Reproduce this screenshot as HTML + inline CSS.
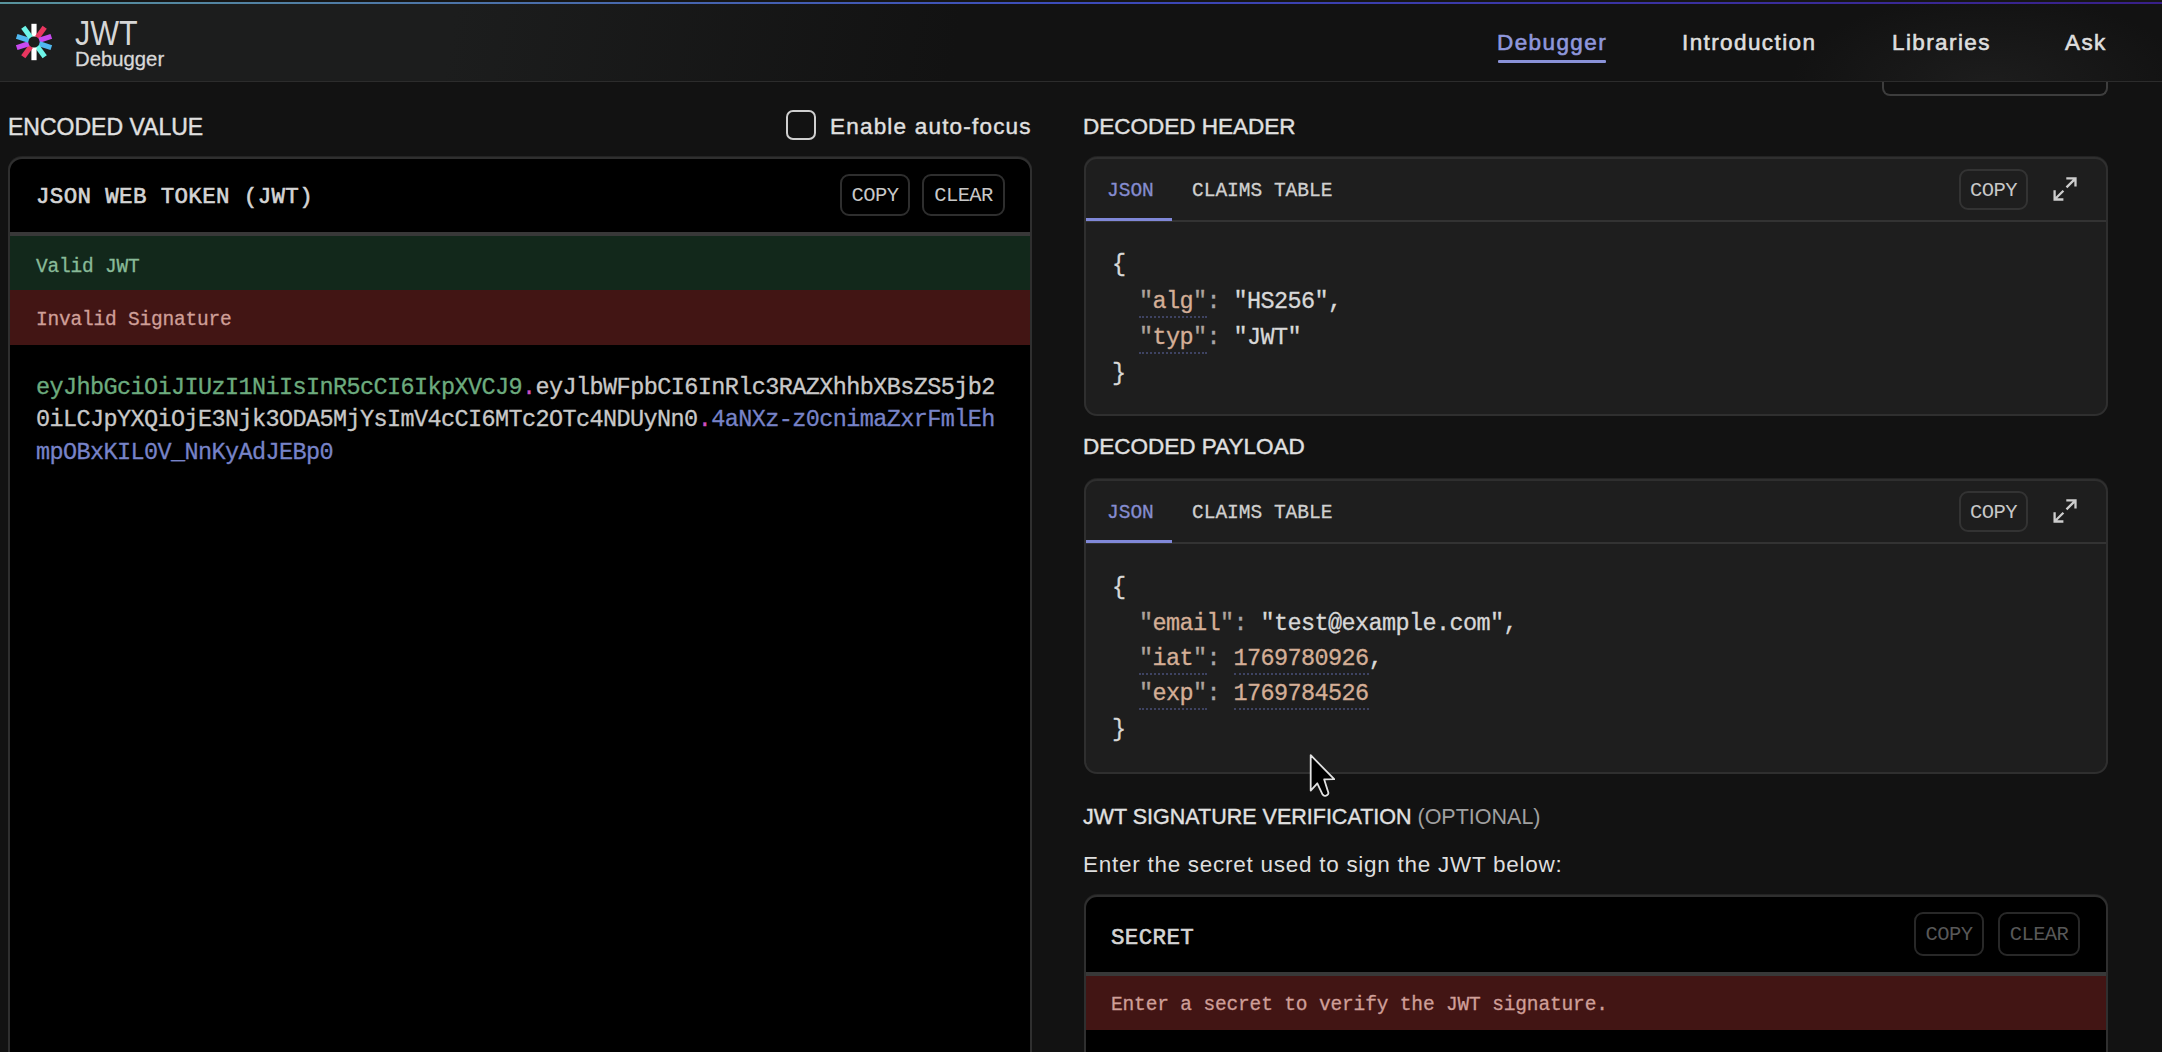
<!DOCTYPE html>
<html>
<head>
<meta charset="utf-8">
<style>
*{box-sizing:border-box;margin:0;padding:0}
html,body{width:2162px;height:1052px;overflow:hidden;background:#121212;font-family:"Liberation Sans",sans-serif;color:#e6e6e6}
.abs{position:absolute}
.mono{font-family:"Liberation Mono",monospace}
#hdr{z-index:1;left:0;top:0;width:2162px;height:82px;background:radial-gradient(ellipse 200px 90px at 1990px 85px,#1d1d1d 0%,rgba(18,18,18,0) 100%),linear-gradient(100deg,#1c1d1d 0px,#1c1d1d 450px,#121212 950px,#121212 100%);border-bottom:1px solid #2c2c2c}
#topline{z-index:2;left:0;top:2px;width:2162px;height:2px;background:linear-gradient(90deg,#58939c 0%,#4a6eaa 25%,#3c4cba 49%,#3a32a2 76%,#381f88 100%)}
.nav{z-index:3;top:28px;font-size:22.5px;font-weight:400;letter-spacing:1.4px;-webkit-text-stroke:.6px currentColor;color:#dedede;white-space:nowrap;line-height:30px}
.label{font-size:23px;color:#e0e0e0;-webkit-text-stroke:.4px currentColor;white-space:nowrap;line-height:26px}
.box{border:2px solid #2f2f2f;border-radius:13px;overflow:hidden;box-shadow:0 -1px 0 #232323}
.q{color:#ada39b}.k{color:#d4ae96}.c{color:#a8a8a8}
.json{position:absolute;left:26px;font-family:"Liberation Mono",monospace;font-size:23.5px;letter-spacing:-.6px;line-height:30px;color:#d8d8d8;white-space:pre;-webkit-text-stroke:.3px currentColor}
.u{border-bottom:2px dotted #3e4362;padding-bottom:1px}
.btn{position:absolute;border:2px solid #2e2e2e;border-radius:9px;font-family:"Liberation Mono",monospace;font-size:20.5px;letter-spacing:-.6px;color:#c8c8c8;text-align:center;line-height:40px}
</style>
</head>
<body>
<div id="hdr" class="abs"></div>
<div class="abs" style="z-index:2;left:0;top:0;width:2162px;height:2px;background:#161616"></div>
<div id="topline" class="abs"></div>

<!-- logo -->
<svg class="abs" style="left:13.5px;top:21.5px;z-index:3" width="40" height="40" viewBox="-20 -20 40 40">
  <g stroke-width="5.2" stroke-linecap="butt">
    <line x1="0" y1="-5.5" x2="0" y2="-18.2" stroke="#ffffff" transform="rotate(0)"/>
    <line x1="0" y1="-5.5" x2="0" y2="-18.2" stroke="#e8365f" transform="rotate(36)"/>
    <line x1="0" y1="-5.5" x2="0" y2="-18.2" stroke="#c84af0" transform="rotate(72)"/>
    <line x1="0" y1="-5.5" x2="0" y2="-18.2" stroke="#50b8f0" transform="rotate(108)"/>
    <line x1="0" y1="-5.5" x2="0" y2="-18.2" stroke="#6ef5e8" transform="rotate(144)"/>
    <line x1="0" y1="-5.5" x2="0" y2="-18.2" stroke="#ffffff" transform="rotate(180)"/>
    <line x1="0" y1="-5.5" x2="0" y2="-18.2" stroke="#e8365f" transform="rotate(216)"/>
    <line x1="0" y1="-5.5" x2="0" y2="-18.2" stroke="#c84af0" transform="rotate(252)"/>
    <line x1="0" y1="-5.5" x2="0" y2="-18.2" stroke="#50b8f0" transform="rotate(288)"/>
    <line x1="0" y1="-5.5" x2="0" y2="-18.2" stroke="#6ef5e8" transform="rotate(324)"/>
  </g>
</svg>
<div id="jwt" class="abs" style="z-index:3;left:74.5px;top:13.5px;font-size:34.5px;line-height:38px;color:#d6d6d6;transform:scaleX(.885);transform-origin:0 0">JWT</div>
<div id="dbg" class="abs" style="z-index:3;left:75px;top:46px;font-size:20.5px;line-height:25px;color:#d8d8d8;-webkit-text-stroke:.3px currentColor;transform:scaleX(.99);transform-origin:0 0">Debugger</div>

<div id="nav1" class="abs nav" style="left:1497px;color:#8f97dc">Debugger</div>
<div class="abs" style="z-index:3;left:1498px;top:60px;width:108px;height:3px;background:#8a92d8;border-radius:1px"></div>
<div id="nav2" class="abs nav" style="left:1682px">Introduction</div>
<div id="nav3" class="abs nav" style="left:1892px">Libraries</div>
<div id="nav4" class="abs nav" style="left:2065px">Ask</div>

<!-- partially hidden box under header -->
<div class="abs" style="left:1882px;top:70px;width:226px;height:26px;border:2px solid #3d3d3d;border-top:none;border-radius:0 0 8px 8px;background:#111"></div>

<!-- LEFT -->
<div id="encl" class="abs label" style="left:8px;top:114px">ENCODED VALUE</div>
<div class="abs" style="left:786px;top:110px;width:30px;height:30px;border:2.5px solid #cfcfcf;border-radius:7px"></div>
<div id="autof" class="abs label" style="left:830px;top:114px;font-size:22.5px;letter-spacing:1.2px">Enable auto-focus</div>

<div id="lbox" class="abs box" style="left:8px;top:157px;width:1024px;height:960px;background:#000;border-radius:14px">
  <div id="jwtt" class="abs mono" style="left:26px;top:23px;font-size:22.5px;letter-spacing:.35px;-webkit-text-stroke:.6px #d4d4d4;color:#d4d4d4;line-height:30px">JSON WEB TOKEN (JWT)</div>
  <div class="btn" style="left:830px;top:15px;width:70px;height:42px">COPY</div>
  <div class="btn" style="left:912px;top:15px;width:83px;height:42px">CLEAR</div>
  <div class="abs" style="left:0;top:72.5px;width:1024px;height:4px;background:#383838"></div>
  <div class="abs" style="left:0;top:76.5px;width:1024px;height:54.5px;background:#12281b"></div>
  <div id="valid" class="abs mono" style="left:26px;top:94.5px;font-size:19.5px;-webkit-text-stroke:.3px #88ba98;color:#88ba98;letter-spacing:-.2px;line-height:26px">Valid JWT</div>
  <div class="abs" style="left:0;top:131px;width:1024px;height:55px;background:#421514"></div>
  <div id="invalid" class="abs mono" style="left:26px;top:148px;font-size:19.5px;-webkit-text-stroke:.3px #cf9f98;color:#cf9f98;letter-spacing:-.2px;line-height:26px">Invalid Signature</div>
  <div id="tok" class="abs mono" style="left:26px;top:213px;font-size:23.5px;letter-spacing:-.6px;line-height:32.25px;color:#c8c8c8;-webkit-text-stroke:.3px currentColor;white-space:pre"><span style="color:#6cab7e">eyJhbGciOiJIUzI1NiIsInR5cCI6IkpXVCJ9</span><span style="color:#d04fc0">.</span>eyJlbWFpbCI6InRlc3RAZXhhbXBsZS5jb2
0iLCJpYXQiOjE3Njk3ODA5MjYsImV4cCI6MTc2OTc4NDUyNn0<span style="color:#d04fc0">.</span><span style="color:#7783c8">4aNXz-z0cnimaZxrFmlEh
mpOBxKIL0V_NnKyAdJEBp0</span></div>
</div>

<!-- RIGHT -->
<div id="dhl" class="abs label" style="left:1083px;top:114px;font-size:22.5px">DECODED HEADER</div>
<div id="hbox" class="abs box" style="left:1084px;top:157px;width:1024px;height:259px;background:#1e1e1e">
  <div class="abs" style="left:0;top:60.5px;width:1024px;height:2px;background:#333"></div>
  <div class="abs" style="left:0;top:58.5px;width:86px;height:3px;background:#8088d8"></div>
  <div class="abs mono" style="left:21px;top:19px;font-size:19.5px;-webkit-text-stroke:.3px #858cd0;color:#858cd0;line-height:26px">JSON</div>
  <div class="abs mono" style="left:106px;top:19px;font-size:19.5px;-webkit-text-stroke:.3px #d0d0d0;color:#d0d0d0;line-height:26px">CLAIMS TABLE</div>
  <div class="btn" style="left:873px;top:9.5px;width:69px;height:41px;border-color:#333;line-height:40px">COPY</div>
  <svg class="abs" style="left:960px;top:11px" width="38" height="38" viewBox="0 0 38 38"><g stroke="#cdcdcd" stroke-width="2.3" fill="none" stroke-linejoin="miter" stroke-linecap="butt"><path d="M20.3 8.4 H29.5 V16.6 M29.3 8.6 L20.5 17.4"/><path d="M8.6 20.3 V29.5 H17.4 M8.8 29.3 L17.4 20.7"/></g></svg>
  <div class="json" style="top:91px">{</div>
  <div class="json" style="top:128px">  <span class="u"><span class="q">"</span><span class="k">alg</span><span class="q">"</span></span><span class="c">:</span> "HS256",</div>
  <div class="json" style="top:163.5px">  <span class="u"><span class="q">"</span><span class="k">typ</span><span class="q">"</span></span><span class="c">:</span> "JWT"</div>
  <div class="json" style="top:199.5px">}</div>
</div>

<div id="dpl" class="abs label" style="left:1083px;top:434px;font-size:22.5px">DECODED PAYLOAD</div>
<div id="pbox" class="abs box" style="left:1084px;top:479px;width:1024px;height:295px;background:#1e1e1e">
  <div class="abs" style="left:0;top:60.5px;width:1024px;height:2px;background:#333"></div>
  <div class="abs" style="left:0;top:58.5px;width:86px;height:3px;background:#8088d8"></div>
  <div class="abs mono" style="left:21px;top:19px;font-size:19.5px;-webkit-text-stroke:.3px #858cd0;color:#858cd0;line-height:26px">JSON</div>
  <div class="abs mono" style="left:106px;top:19px;font-size:19.5px;-webkit-text-stroke:.3px #d0d0d0;color:#d0d0d0;line-height:26px">CLAIMS TABLE</div>
  <div class="btn" style="left:873px;top:9.5px;width:69px;height:41px;border-color:#333;line-height:40px">COPY</div>
  <svg class="abs" style="left:960px;top:11px" width="38" height="38" viewBox="0 0 38 38"><g stroke="#cdcdcd" stroke-width="2.3" fill="none" stroke-linejoin="miter" stroke-linecap="butt"><path d="M20.3 8.4 H29.5 V16.6 M29.3 8.6 L20.5 17.4"/><path d="M8.6 20.3 V29.5 H17.4 M8.8 29.3 L17.4 20.7"/></g></svg>
  <div class="json" style="top:92.3px">{</div>
  <div class="json" style="top:127.5px">  <span class="q">"</span><span class="k">email</span><span class="q">"</span><span class="c">:</span> "test@example.com",</div>
  <div class="json" style="top:162.5px">  <span class="u"><span class="q">"</span><span class="k">iat</span><span class="q">"</span></span><span class="c">:</span> <span class="u k">1769780926</span>,</div>
  <div class="json" style="top:197.5px">  <span class="u"><span class="q">"</span><span class="k">exp</span><span class="q">"</span></span><span class="c">:</span> <span class="u k">1769784526</span></div>
  <div class="json" style="top:234px">}</div>
</div>

<div id="sigl" class="abs label" style="left:1083px;top:804px;font-size:21.5px"><span style="-webkit-text-stroke:.35px #e6e6e6">JWT SIGNATURE VERIFICATION</span> <span style="color:#a0a0a0;-webkit-text-stroke:0">(OPTIONAL)</span></div>
<div id="entl" class="abs label" style="left:1083px;top:852px;color:#dedede;-webkit-text-stroke:0;font-size:22.5px;letter-spacing:.73px">Enter the secret used to sign the JWT below:</div>
<div id="sbox" class="abs box" style="left:1084px;top:895px;width:1024px;height:300px;background:#000">
  <div id="secl" class="abs mono" style="left:25px;top:25.5px;font-size:22.5px;letter-spacing:.35px;-webkit-text-stroke:.6px #d4d4d4;color:#d4d4d4;line-height:30px">SECRET</div>
  <div class="btn" style="left:828px;top:15px;width:70px;height:44px;color:#585858;border-color:#282828;line-height:42px">COPY</div>
  <div class="btn" style="left:912px;top:15px;width:82px;height:44px;color:#585858;border-color:#282828;line-height:42px">CLEAR</div>
  <div class="abs" style="left:0;top:74.5px;width:1024px;height:4.5px;background:#383838"></div>
  <div class="abs" style="left:0;top:79px;width:1024px;height:53.5px;background:#421514"></div>
  <div class="abs mono" style="left:25px;top:95px;font-size:19.5px;letter-spacing:-.15px;-webkit-text-stroke:.3px #cf9f98;color:#cf9f98;line-height:26px">Enter a secret to verify the JWT signature.</div>
</div>

<!-- cursor -->
<svg class="abs" style="left:1295px;top:745px" width="50" height="60" viewBox="0 0 50 60"><path d="M15.7 10.2 L15.7 45.6 L22.3 38.3 L27.6 49.6 Q28.8 51.4 31 50.6 L32 50.1 Q33.9 49 33.2 47.2 L29.2 34.4 L39.2 34.2 Z" fill="#000" stroke="#e0e0e0" stroke-width="1.8" stroke-linejoin="round"/></svg>
</body>
</html>
